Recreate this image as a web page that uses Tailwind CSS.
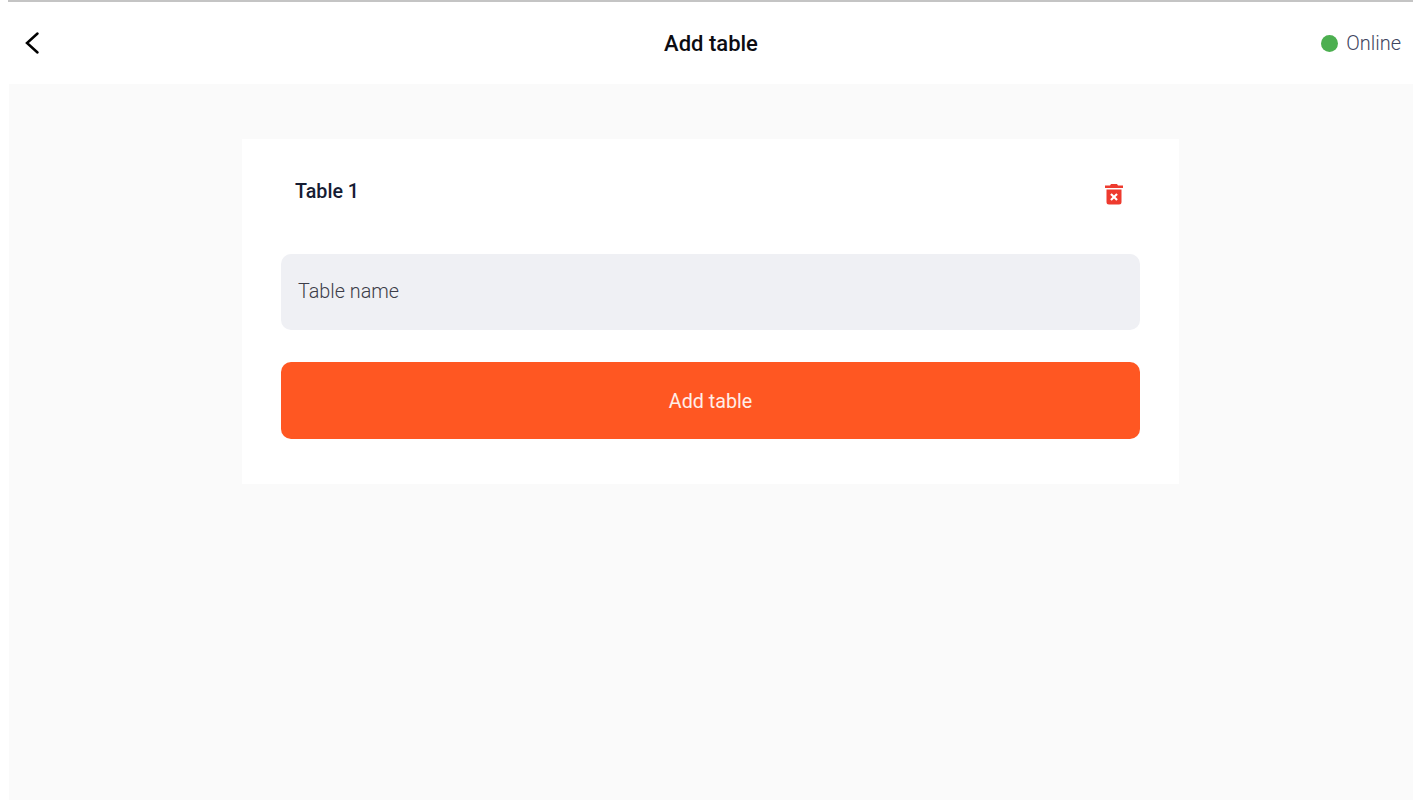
<!DOCTYPE html>
<html lang="en">

<head>
    <meta charset="UTF-8">
    <meta name="viewport" content="width=device-width, initial-scale=1.0">
    <title>Add table</title>
    <script src="https://cdn.jsdelivr.net/npm/@tailwindcss/browser@4"></script>
</head>

<body class="bg-white font-['Roboto',sans-serif] h-[800px] overflow-hidden">
    <div class="pl-[8px] pr-[9px]">
        <div class="h-[2px] bg-[#c4c4c4]"></div>
    </div>

    <header class="h-[82px] grid grid-cols-3 items-center pl-[23px] pr-[21px]">
        <button class="w-[18px] h-[24px] flex items-center">
            <svg width="18" height="24" viewBox="0 0 18 24" fill="none" stroke="#000" stroke-width="2.5">
                <path d="M14.5 2.5 L4 12 L14.5 21.5" stroke-linecap="round" stroke-linejoin="miter" />
            </svg>
        </button>
        <h1 class="text-[22px] leading-[28px] pt-[2px] pr-[2px] font-medium text-[#0c0c12] text-center">Add table</h1>
        <div class="flex items-center justify-end gap-[8px]">
            <span class="w-[17px] h-[17px] rounded-full bg-[#4caf50]"></span>
            <span class="text-[20px] font-light text-[#3f4560]">Online</span>
        </div>
    </header>

    <main class="ml-[9px] mr-[9px] h-[716px] bg-[#fafafa] pt-[55px]">
        <div class="w-[937px] h-[345px] ml-[233px] bg-white pt-[39px] px-[39px]">
            <div class="flex items-start justify-between pl-[14px] pr-[14px] h-[76px]">
                <h2 class="text-[19.7px] leading-[28px] font-medium text-[#161d33]">Table 1</h2>
                <svg class="mt-[3px]" width="24" height="26" viewBox="0 0 24 24" fill="#ee3a2e">
                    <path d="M9 2h6l1 1.5h5V6H3V3.5h5z" />
                    <path fill-rule="evenodd" d="M4.5 7.5h15V20a2.5 2.5 0 0 1-2.5 2.5H7A2.5 2.5 0 0 1 4.5 20z M9.7 11.2l-1.5 1.5 2.3 2.3-2.3 2.3 1.5 1.5 2.3-2.3 2.3 2.3 1.5-1.5-2.3-2.3 2.3-2.3-1.5-1.5-2.3 2.3z" />
                </svg>
            </div>
            <div class="h-[76px] rounded-[10px] bg-[#eff0f4] flex items-center px-[17px] text-[19.8px] font-light text-[#3c3d48]">Table name</div>
            <button class="mt-[32px] w-full h-[77px] rounded-[10px] bg-[#ff5722] text-white/90 text-[19.7px] pt-[2px] flex items-center justify-center">Add table</button>
        </div>
    </main>
</body>

</html>
